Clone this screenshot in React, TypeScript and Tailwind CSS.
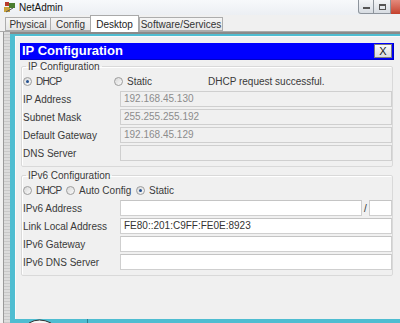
import React from 'react';

const Radio = ({ checked }: { checked?: boolean }) => (
  <span className="inline-flex w-[9px] h-[9px] rounded-full border border-[#9c9c9c] bg-gradient-to-br from-[#d8d8d8] to-[#fafafa] items-center justify-center shrink-0">
    {checked && <span className="w-[3px] h-[3px] rounded-full bg-[#23508f]" />}
  </span>
);

const Option = ({ label, checked, width, narrow }: { label: string; checked?: boolean; width: string; narrow?: boolean }) => (
  <div className={`${width} shrink-0 flex items-center`}>
    <Radio checked={checked} />
    <span className={narrow ? 'ml-[4px] tracking-[-0.7px]' : 'ml-[4px]'}>{label}</span>
  </div>
);

const Field = ({ label, value, disabled, children }: { label: string; value?: string; disabled?: boolean; children?: React.ReactNode }) => (
  <div className="flex items-center h-[16px]">
    <div className="w-[98px] shrink-0 pl-[1px] text-[#3a3a3a]">{label}</div>
    {children ?? (
      <div
        className={
          disabled
            ? 'flex-1 h-full border border-[#cfcfcf] bg-[#f0f0f0] text-[#8c8c8c] px-[3px] leading-[14px]'
            : 'flex-1 h-full border border-[#cfcfcf] border-t-[#c4c4c4] bg-white text-[#333] px-[3px] leading-[14px]'
        }
      >
        {value}
      </div>
    )}
  </div>
);

const App = () => {
  const tabs = ['Physical', 'Config', 'Desktop', 'Software/Services'];

  return (
    <div className="w-[400px] h-[323px] overflow-hidden bg-[#f0f0f0] text-[10px] font-['Liberation_Sans',Arial,sans-serif] flex flex-col">
      {/* window title bar */}
      <div className="h-[15px] shrink-0 flex items-start bg-gradient-to-b from-[#f7f9fb] to-[#eceff3]">
        <svg width="14" height="13" viewBox="0 0 14 13" className="ml-[3px] mt-[1px]">
          <rect x="1" y="6" width="6" height="5" fill="#c9a23a" />
          <rect x="6" y="2" width="6" height="5" fill="#4a7d2f" />
          <rect x="2" y="1" width="4" height="4" fill="#b83a2a" />
          <path d="M3 11 L10 7" stroke="#555" strokeWidth="1" />
        </svg>
        <span className="ml-[2px] mt-[2px] leading-[11px] text-[#111]">NetAdmin</span>
        <div className="ml-auto flex h-[14px]">
          <div className="w-[16px] h-full border border-t-0 border-[#8d949c] rounded-bl-[3px] bg-gradient-to-b from-[#f4f6f8] to-[#d7dce2] flex items-center justify-center">
            <span className="w-[7px] h-[2px] border border-[#555] mt-[3px]" />
          </div>
          <div className="w-[17px] h-full border border-t-0 border-l-0 border-[#8d949c] bg-gradient-to-b from-[#f4f6f8] to-[#d7dce2] flex items-center justify-center">
            <span className="w-[7px] h-[6px] border border-[#555] border-t-2" />
          </div>
          <div className="w-[9px] h-full bg-gradient-to-b from-[#e48a7c] to-[#c4402c]" />
        </div>
      </div>

      {/* tabs */}
      <div className="h-[16px] shrink-0 flex items-end pl-[5px]">
        {tabs.map((t) => {
          const active = t === 'Desktop';
          const w = t === 'Physical' ? 'w-[45px]' : t === 'Config' ? 'w-[40px]' : t === 'Desktop' ? 'w-[49px]' : 'w-[84px]';
          return (
            <div
              key={t}
              className={
                active
                  ? `${w} h-[17px] -mb-[1px] bg-white border border-b-0 border-[#a9a9a9] flex items-center justify-center text-[#222] relative z-10`
                  : `${w} h-[14px] bg-gradient-to-b from-[#f5f5f5] to-[#e6e6e6] border border-[#adadad] border-r-0 last:border-r flex items-center justify-center text-[#333]`
              }
            >
              {t}
            </div>
          );
        })}
      </div>

      {/* body */}
      <div className="flex-1 flex border-t border-[#a9a9a9] min-h-0">
        <div className="w-[10px] shrink-0 flex">
          <div className="w-[3px] bg-[#f2f2f2]" />
          <div className="w-[1px] bg-[#9a9a9a]" />
          <div className="w-[6px] bg-[repeating-linear-gradient(180deg,#dcdcdc_0px,#dcdcdc_2px,#c9c9c9_2px,#c9c9c9_3px)]" />
        </div>
        <div className="flex-1 flex flex-col bg-[#4fbdd1] border-t-2 border-[#8a8a8a] pl-[5px] pt-[2px]">
          {/* dialog */}
          <div className="flex-1 bg-[#f0f0f0] border-l border-t border-[#fafafa] pt-[6px] pl-[4px] flex flex-col">
            <div className="w-[374px] h-[17px] bg-[#0000ff] border-r border-b border-[#0000c8] flex items-center">
              <span className="ml-[2px] text-white font-bold text-[13px] leading-[16px]">IP Configuration</span>
              <div className="ml-auto mr-[1px] w-[18px] h-[14px] border border-[#7d7d7d] bg-gradient-to-b from-[#fafafa] to-[#dcdcdc] flex items-center justify-center text-[#222] text-[11px] leading-none">
                X
              </div>
            </div>

            <fieldset className="mt-[1px] ml-[1px] w-[372px] border border-[#d9d9d9] rounded-[2px] pb-[5px] shadow-[inset_1px_1px_0_#ffffff]">
              <legend className="ml-[4px] px-[2px] leading-[11px] text-[#3a3a3a]">IP Configuration</legend>
              <div className="h-[19px] flex items-center text-[#3a3a3a] pl-[1px]">
                <Option label="DHCP" checked narrow width="w-[91px]" />
                <Option label="Static" width="w-[94px]" />
                <span>DHCP request successful.</span>
              </div>
              <div className="flex flex-col gap-[2px]">
                <Field label="IP Address" value="192.168.45.130" disabled />
                <Field label="Subnet Mask" value="255.255.255.192" disabled />
                <Field label="Default Gateway" value="192.168.45.129" disabled />
                <Field label="DNS Server" value="" disabled />
              </div>
            </fieldset>

            <fieldset className="mt-[3px] ml-[1px] w-[372px] border border-[#d9d9d9] rounded-[2px] pb-[5px] shadow-[inset_1px_1px_0_#ffffff]">
              <legend className="ml-[4px] px-[2px] leading-[11px] text-[#3a3a3a]">IPv6 Configuration</legend>
              <div className="h-[19px] flex items-center text-[#3a3a3a] pl-[1px]">
                <Option label="DHCP" narrow width="w-[43px]" />
                <Option label="Auto Config" width="w-[70px]" />
                <Option label="Static" checked width="w-[60px]" />
              </div>
              <div className="flex flex-col gap-[2px]">
                <Field label="IPv6 Address">
                  <div className="flex-1 flex items-center h-full">
                    <div className="flex-1 h-full border border-[#cfcfcf] border-t-[#c4c4c4] bg-white" />
                    <span className="w-[7px] text-center text-[#333]">/</span>
                    <div className="w-[23px] h-full border border-[#cfcfcf] border-t-[#c4c4c4] bg-white" />
                  </div>
                </Field>
                <Field label="Link Local Address" value="FE80::201:C9FF:FE0E:8923" />
                <Field label="IPv6 Gateway" value="" />
                <Field label="IPv6 DNS Server" value="" />
              </div>
            </fieldset>
            <div className="flex-1" />
          </div>
          <div className="h-[4px] shrink-0 flex items-start">
            <svg width="30" height="4" viewBox="0 0 30 4" className="ml-[12px]">
              <path d="M2 4 Q12 -2 24 4" fill="#f4f4f4" stroke="#333" strokeWidth="1" />
            </svg>
            <div className="ml-[30px] w-[1px] h-full bg-[#2f7f90]" />
          </div>
        </div>
      </div>
    </div>
  );
};

export default App;
